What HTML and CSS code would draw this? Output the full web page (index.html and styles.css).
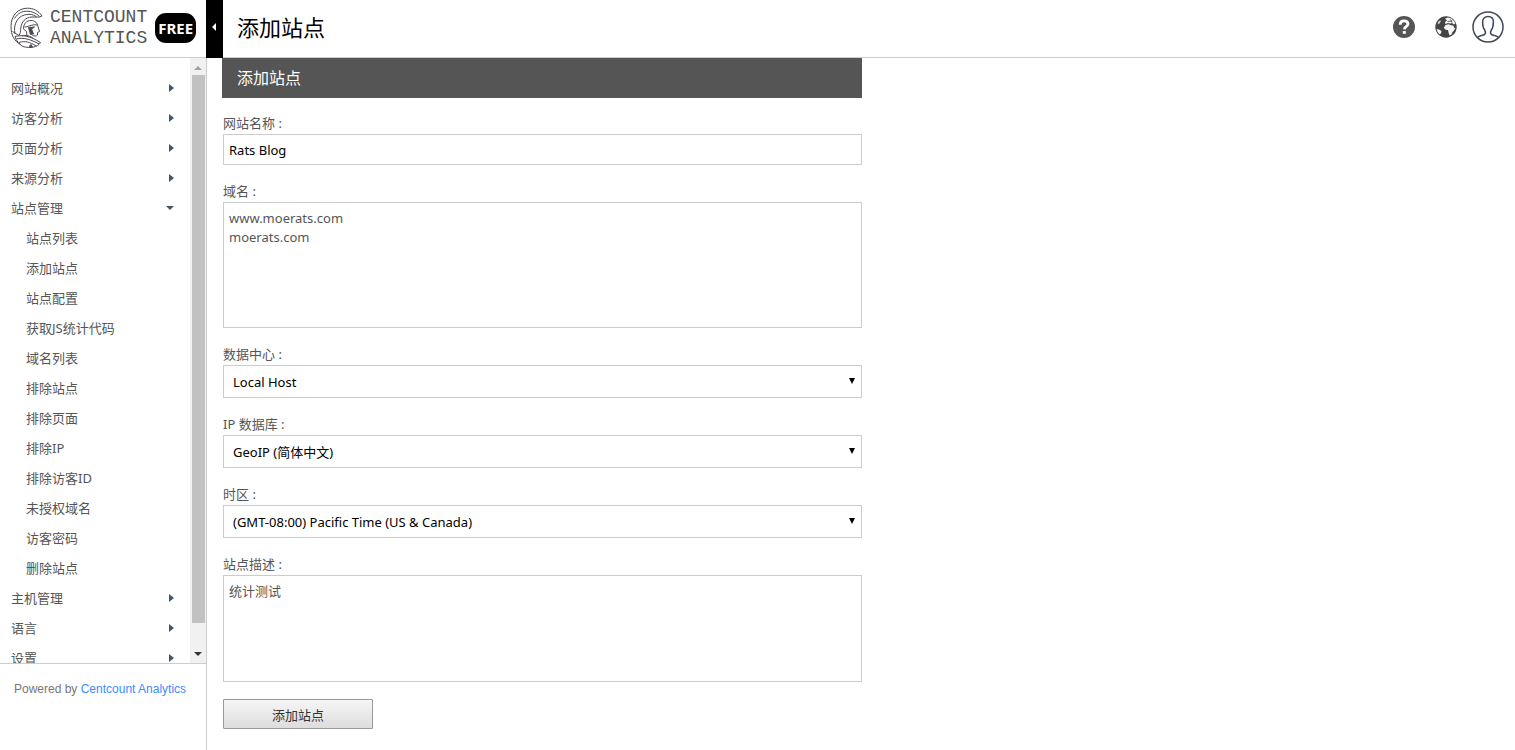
FILE: index.html
```html
<!DOCTYPE html>
<html lang="zh-CN">
<head>
    <meta charset="UTF-8">
    <meta name="viewport" content="width=device-width, initial-scale=1.0">
    <title>添加站点</title>
    <link rel="stylesheet" href="styles.css">
</head>
<body>
    <header class="header">
        <a class="brand" href="#">
            <svg class="brand-mark" viewBox="0 0 34 42" aria-hidden="true">
                <path d="M32 9C28.500 3.500 23 1.200 17.500 1.200C8 1.200 1 8.500 1 19.500C1 28 4 34 10.500 37.500"/>
                <path d="M32 9C28.500 11 26 9.800 22 10C15 10.300 11.500 15 10.800 21C10.500 24.500 10.500 26.500 9 28.500"/>
                <path d="M4.500 11.500C8 6 12 4.200 17 4.200C22 4.200 26 6 29.500 9.500"/>
                <path d="M5 27C3 18 7 7.500 19 7.300C22.500 7.300 24.500 8.500 26.500 9.800"/>
                <path d="M2.500 24.500L9 28.500"/>
                <path d="M13.500 22C13.500 16.500 16.500 13.500 21 13.500C25 13.500 27.500 16 28 19.500L29.500 24.500L27.500 25.500L27.500 28C26 29.500 24.500 29 22.500 28.500"/>
                <path d="M13.500 22L16.500 24.500L17 29M14.500 20C18 20.200 21 17 27.500 18"/>
                <path class="brand-stud" d="M18.500 20.500L24.500 20L21.500 22L23.500 27L20.500 27.500Z"/>
                <path d="M5 29.500C13 27.500 20 29 30.500 35.500C27.500 40.500 20 41.500 13 39.500C9 37.500 6.500 34 5 29.500Z"/>
                <path d="M6.500 32C13 30 21 32.500 29 37M9 35.500C15 33.500 20 35 26 39M12 29C16 27.500 20 29 23.500 31.500"/>
                <path class="brand-stud" d="M19.500 39L21 37.500L22.500 40L20 40.500Z"/>
            </svg>
            <span class="brand-name">CENTCOUNT<br>ANALYTICS</span>
            <span class="brand-badge">FREE</span>
        </a>
        <button class="toggle" type="button" aria-label="收起菜单"></button>
        <h1 class="page-title">添加站点</h1>
        <div class="tools">
            <button class="tool" type="button" aria-label="帮助">
                <svg width="24" height="24" viewBox="0 0 24 24">
                    <circle cx="12" cy="12" r="11" fill="#555"/>
                    <path d="M8.200 9.700C8.200 7 9.800 5.900 12.100 5.900C14.400 5.900 16 7.200 16 9C16 11.500 12.600 11.300 12.400 14.300" fill="none" stroke="#fff" stroke-width="2.800"/>
                    <rect x="10.800" y="16" width="3" height="2.800" fill="#fff"/>
                </svg>
            </button>
            <button class="tool" type="button" aria-label="语言">
                <svg width="24" height="24" viewBox="0 0 24 24">
                    <circle cx="12" cy="12" r="10.700" fill="#444"/>
                    <path d="M11 3.500L14 2.500L17.500 3.500L20.500 6.500L21.300 9L19.500 9.200L18 8L16 8.500L14 8L11.500 9L11 7L13 5.500Z" fill="#f4f4f4"/>
                    <path d="M11.500 10L14.500 9.300L17 10.200L19.300 10.500L20.300 13L21.500 12.800L20 15.500L18.500 17L17.500 19.500L15.500 20.500L14.500 17.500L14 15L11.500 14.700L9.800 12.800Z" fill="#f4f4f4"/>
                    <path d="M2.500 14L5 14.500L7.500 16L7 18.500L5.500 19.300L3.500 17Z" fill="#f4f4f4"/>
                    <path d="M3.800 7L6 5.300L7 6L5.500 8.500L3.800 9.500Z" fill="#ccc"/>
                    <path d="M13.500 6.500L18.500 6M16.500 4.500L18 7.500" stroke="#444" stroke-width=".8" fill="none"/>
                </svg>
            </button>
            <button class="tool tool-user" type="button" aria-label="用户">
                <svg width="32" height="32" viewBox="0 0 32 32" fill="none" stroke="#3e4858" stroke-width="1.500">
                    <circle cx="16" cy="16" r="15"/>
                    <path d="M5.500 26.500C7 24.500 10.500 24.700 12.500 23.500C14 22.300 13.500 20.500 12.800 19.300C11 17 10.600 14.500 10.600 11C10.600 7.500 12.700 5.600 16 5.600C19.300 5.600 21.400 7.500 21.400 11C21.400 14.500 21 17 19.200 19.300C18.500 20.500 18 22.300 19.500 23.500C21.500 24.700 25 24.500 26.500 26.500"/>
                </svg>
            </button>
        </div>
    </header>

    <div class="layout">
        <aside class="sidebar">
            <div class="menu-wrap">
                <nav class="menu">
                    <ul>
                        <li><a class="has-sub" href="#">网站概况</a></li>
                        <li><a class="has-sub" href="#">访客分析</a></li>
                        <li><a class="has-sub" href="#">页面分析</a></li>
                        <li><a class="has-sub" href="#">来源分析</a></li>
                        <li>
                            <a class="has-sub open" href="#">站点管理</a>
                            <ul class="submenu">
                                <li><a href="#">站点列表</a></li>
                                <li><a href="#">添加站点</a></li>
                                <li><a href="#">站点配置</a></li>
                                <li><a href="#">获取JS统计代码</a></li>
                                <li><a href="#">域名列表</a></li>
                                <li><a href="#">排除站点</a></li>
                                <li><a href="#">排除页面</a></li>
                                <li><a href="#">排除IP</a></li>
                                <li><a href="#">排除访客ID</a></li>
                                <li><a href="#">未授权域名</a></li>
                                <li><a href="#">访客密码</a></li>
                                <li><a href="#">删除站点</a></li>
                            </ul>
                        </li>
                        <li><a class="has-sub" href="#">主机管理</a></li>
                        <li><a class="has-sub" href="#">语言</a></li>
                        <li><a class="has-sub" href="#">设置</a></li>
                    </ul>
                </nav>
                <div class="scrollbar" aria-hidden="true">
                    <span class="scroll-up"></span>
                    <span class="scroll-thumb"></span>
                    <span class="scroll-down"></span>
                </div>
            </div>
            <footer class="powered">Powered by <a href="#">Centcount Analytics</a></footer>
        </aside>

        <main class="content">
            <form class="site-form">
                <h2 class="form-title">添加站点</h2>
                <div class="fields">
                    <div class="field">
                        <label for="site-name">网站名称 :</label>
                        <input type="text" id="site-name" value="Rats Blog">
                    </div>
                    <div class="field">
                        <label for="domains">域名 :</label>
                        <textarea id="domains" class="domains" spellcheck="false">www.moerats.com
moerats.com</textarea>
                    </div>
                    <div class="field">
                        <label for="datacenter">数据中心 :</label>
                        <div class="select">
                            <select id="datacenter"><option>Local Host</option></select>
                        </div>
                    </div>
                    <div class="field">
                        <label for="ipdb">IP 数据库 :</label>
                        <div class="select">
                            <select id="ipdb"><option>GeoIP (简体中文)</option></select>
                        </div>
                    </div>
                    <div class="field">
                        <label for="timezone">时区 :</label>
                        <div class="select">
                            <select id="timezone"><option>(GMT-08:00) Pacific Time (US &amp; Canada)</option></select>
                        </div>
                    </div>
                    <div class="field">
                        <label for="description">站点描述 :</label>
                        <textarea id="description" class="description" spellcheck="false">统计测试</textarea>
                    </div>
                    <button class="submit" type="button">添加站点</button>
                </div>
            </form>
        </main>
    </div>
</body>
</html>
```

FILE: styles.css
```css
* {
    box-sizing: border-box;
}

body {
    display: flex;
    flex-direction: column;
    height: 100vh;
    margin: 0;
    background: #fff;
    color: #555;
    font-family: "Noto Sans", "Noto Sans CJK SC", sans-serif;
    font-size: 13px;
}

ul {
    list-style: none;
    margin: 0;
    padding: 0;
}

a {
    color: inherit;
    text-decoration: none;
}

button,
input,
select,
textarea {
    font: inherit;
}

/* header */
.header {
    display: flex;
    flex: none;
    height: 58px;
    border-bottom: 1px solid #ccc;
}

.brand {
    display: flex;
    align-items: center;
    width: 206px;
    padding: 0 0 2px 10px;
}

.brand-mark {
    width: 34px;
    height: 42px;
    fill: none;
    stroke: #4d4850;
    stroke-width: 1;
}

.brand-mark .brand-stud {
    fill: #4d4850;
}

.brand-name {
    margin-left: 6px;
    color: #555;
    font-family: "Liberation Mono", monospace;
    font-size: 18px;
    line-height: 21px;
}

.brand-badge {
    width: 41px;
    margin-left: 8px;
    border-radius: 11px;
    background: #000;
    color: #fff;
    font-size: 15px;
    font-weight: bold;
    line-height: 30px;
    text-align: center;
}

.toggle {
    display: flex;
    align-items: center;
    justify-content: center;
    width: 17px;
    height: 58px;
    padding: 0 2px 4px 0;
    border: 0;
    background: #000;
}

.toggle::before {
    content: "";
    border: 4px solid transparent;
    border-left-width: 0;
    border-right-color: #fff;
}

.page-title {
    flex: 1;
    margin: 0 0 0 14px;
    color: #000;
    font-size: 22px;
    font-weight: normal;
    line-height: 54px;
}

.tools {
    display: flex;
    align-items: center;
    gap: 18px;
    padding: 0 11px 3px 0;
}

.tool {
    display: flex;
    padding: 0;
    border: 0;
    background: none;
}

.tool-user {
    margin-left: -4px;
}

/* sidebar */
.layout {
    display: flex;
    flex: 1;
    min-height: 0;
}

.sidebar {
    display: flex;
    flex: none;
    flex-direction: column;
    width: 207px;
    border-right: 1px solid #ccc;
}

.menu-wrap {
    display: flex;
    flex: 1;
    min-height: 0;
}

.menu {
    flex: 1;
    padding-top: 14px;
    overflow-y: auto;
    scrollbar-width: none;
}

.menu a {
    display: flex;
    align-items: center;
    justify-content: space-between;
    height: 30px;
    padding: 0 16px 0 11px;
}

.menu .submenu a {
    padding-left: 26px;
}

.has-sub::after {
    content: "";
    margin-top: 2px;
    border: 4px solid transparent;
    border-right-width: 0;
    border-left: 5px solid #456;
}

.has-sub.open::after {
    border: 4px solid transparent;
    border-bottom-width: 0;
    border-top-color: #456;
}

.scrollbar {
    display: flex;
    flex-direction: column;
    align-items: center;
    width: 16px;
    padding: 8px 0 7px;
    background: #f1f1f1;
}

.scroll-up,
.scroll-down {
    border: 4px solid transparent;
}

.scroll-up {
    border-top-width: 0;
    border-bottom-color: #a3a3a3;
}

.scroll-thumb {
    flex: 1;
    width: 13px;
    margin: 5px 0 29px;
    background: #c1c1c1;
}

.scroll-down {
    border-bottom-width: 0;
    border-top-color: #333;
}

.powered {
    height: 87px;
    padding: 15px 14px;
    border-top: 1px solid #ccc;
    color: #777;
    font-family: "Liberation Sans", Arial, sans-serif;
    font-size: 12px;
    line-height: 20px;
    white-space: nowrap;
}

.powered a {
    color: #3b8cff;
}

/* form */
.content {
    flex: 1;
    padding-left: 15px;
    overflow-y: auto;
    scrollbar-width: none;
}

.site-form {
    max-width: 640px;
}

.form-title {
    margin: 0;
    padding-left: 15px;
    background: #555;
    color: #fff;
    font-size: 16px;
    font-weight: normal;
    line-height: 40px;
}

.fields {
    padding: 14px 0 20px 1px;
}

.field {
    margin-bottom: 15px;
}

.field label {
    display: block;
    height: 22px;
    line-height: 22px;
}

.field input,
.field textarea,
.field select {
    display: block;
    width: 100%;
    border: 1px solid #ccc;
    border-radius: 0;
    background: #fff;
    color: #000;
}

.field input {
    height: 31px;
    padding: 0 5px;
}

.field textarea {
    padding: 6px 5px;
    color: #555;
    line-height: 19px;
    resize: none;
}

.domains {
    height: 126px;
}

.description {
    height: 107px;
}

.select {
    position: relative;
}

.select::after {
    content: "";
    position: absolute;
    top: 13px;
    right: 7px;
    border: 3px solid transparent;
    border-top: 6px solid #000;
    border-bottom: 0;
    pointer-events: none;
}

.field select {
    height: 33px;
    padding: 0 9px;
    appearance: none;
}

.submit {
    width: 150px;
    height: 30px;
    margin-top: 2px;
    padding: 0;
    border: 1px solid #999;
    border-radius: 1px;
    background: linear-gradient(#f6f6f6, #ddd);
    color: #333;
}
```
